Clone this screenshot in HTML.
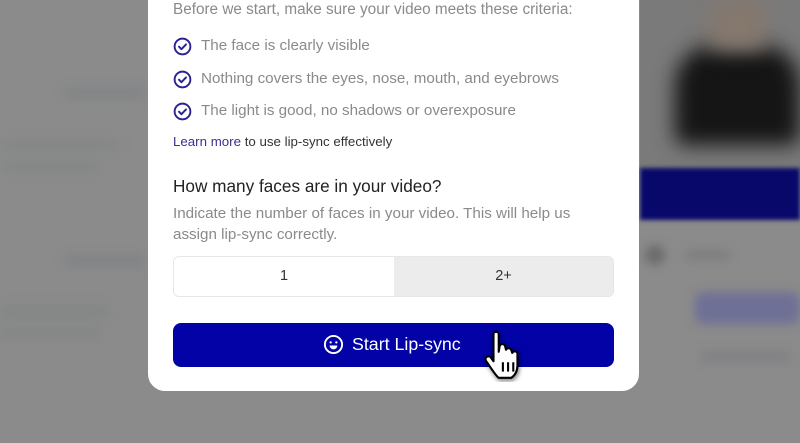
<!DOCTYPE html>
<html><head><style>
*{margin:0;padding:0;box-sizing:border-box}
body{width:800px;height:443px;overflow:hidden;background:#8b8b8b;position:relative;font-family:"Liberation Sans",sans-serif}
.b{position:absolute;filter:blur(5px);border-radius:4px}
.modal{position:absolute;left:148px;top:-20px;width:491px;height:411px;background:#fff;border-radius:0 0 17px 17px}
.t{position:absolute;white-space:nowrap}
.chk{position:absolute;left:173px;width:19px;height:19px}
</style></head><body>
<div class="b" style="left:65px;top:88px;width:80px;height:10px;background:#818385"></div>
<div class="b" style="left:0;top:140px;width:120px;height:10px;background:#848687"></div>
<div class="b" style="left:0;top:162px;width:100px;height:10px;background:#848687"></div>
<div class="b" style="left:65px;top:255px;width:80px;height:12px;background:#818385"></div>
<div class="b" style="left:0;top:305px;width:110px;height:12px;background:#848687"></div>
<div class="b" style="left:0;top:327px;width:100px;height:12px;background:#848687"></div>
<div style="position:absolute;left:640px;top:0;width:160px;height:170px;background:#7a7a7a"></div>
<div class="b" style="left:675px;top:45px;width:125px;height:100px;background:#151515;border-radius:40px 40px 10px 10px;filter:blur(10px)"></div>
<div class="b" style="left:710px;top:0;width:55px;height:50px;background:#85786d;filter:blur(10px)"></div>
<div style="position:absolute;left:640px;top:168px;width:160px;height:52px;background:#08086a;filter:blur(2px)"></div>
<div class="b" style="left:645px;top:245px;width:20px;height:20px;background:#6a6a6c;border-radius:50%"></div>
<div class="b" style="left:685px;top:250px;width:45px;height:10px;background:#7d7d80"></div>
<div class="b" style="left:695px;top:292px;width:105px;height:32px;background:#6f7096;border-radius:8px"></div>
<div class="b" style="left:700px;top:352px;width:90px;height:10px;background:#808083"></div>
<div class="modal"></div>
<div class="t" style="left:173px;top:1px;font-size:15.3px;color:#8a8a8a">Before we start, make sure your video meets these criteria:</div>
<svg class="chk" style="top:37px" viewBox="0 0 20 20"><circle cx="10" cy="10" r="8.3" fill="none" stroke="#2a2290" stroke-width="2"/><path d="M6.3 10.2l2.6 2.6 4.8-5" fill="none" stroke="#2a2290" stroke-width="2" stroke-linecap="round" stroke-linejoin="round"/></svg>
<svg class="chk" style="top:70px" viewBox="0 0 20 20"><circle cx="10" cy="10" r="8.3" fill="none" stroke="#2a2290" stroke-width="2"/><path d="M6.3 10.2l2.6 2.6 4.8-5" fill="none" stroke="#2a2290" stroke-width="2" stroke-linecap="round" stroke-linejoin="round"/></svg>
<svg class="chk" style="top:102px" viewBox="0 0 20 20"><circle cx="10" cy="10" r="8.3" fill="none" stroke="#2a2290" stroke-width="2"/><path d="M6.3 10.2l2.6 2.6 4.8-5" fill="none" stroke="#2a2290" stroke-width="2" stroke-linecap="round" stroke-linejoin="round"/></svg>
<div class="t" style="left:201px;top:37px;font-size:15.2px;color:#8a8a8a">The face is clearly visible</div>
<div class="t" style="left:201px;top:70px;font-size:15.2px;color:#8a8a8a">Nothing covers the eyes, nose, mouth, and eyebrows</div>
<div class="t" style="left:201px;top:102px;font-size:15.2px;color:#8a8a8a">The light is good, no shadows or overexposure</div>
<div class="t" style="left:173px;top:134px;font-size:13.3px;color:#333"><span style="color:#3b318f">Learn more</span> to use lip-sync effectively</div>
<div class="t" style="left:173px;top:176px;font-size:17.2px;color:#222">How many faces are in your video?</div>
<div class="t" style="left:173px;top:203px;font-size:15.2px;color:#8a8a8a;line-height:21px">Indicate the number of faces in your video. This will help us<br>assign lip-sync correctly.</div>
<div style="position:absolute;left:173px;top:256px;width:441px;height:41px;border:1px solid #e6e6e6;border-radius:6px;overflow:hidden;display:flex">
<div style="width:220px;background:#fff;text-align:center;line-height:39px;font-size:14.5px;color:#333">1</div>
<div style="flex:1;background:#ececec;text-align:center;line-height:39px;font-size:14.5px;color:#333">2+</div>
</div>
<div style="position:absolute;left:173px;top:323px;width:441px;height:44px;background:#0202a6;border-radius:8px"></div>
<svg style="position:absolute;left:323px;top:334px;width:21px;height:21px" viewBox="0 0 20 20"><circle cx="10" cy="10" r="8.2" fill="none" stroke="#fff" stroke-width="1.8"/><circle cx="7.3" cy="8" r="1.1" fill="#fff"/><circle cx="12.7" cy="8" r="1.1" fill="#fff"/><path d="M6.3 11h7.4a3.7 3.7 0 0 1-7.4 0z" fill="#fff"/></svg>
<div class="t" style="left:352px;top:334px;font-size:17.8px;color:#fff">Start Lip-sync</div>
<svg style="position:absolute;left:483px;top:330px;width:46px;height:52px" viewBox="0 0 44 50"><path d="M10 4c0-3 5-3 5 0v17l1-6c1-2 4-2 5 0l1 4c1-2 4-2 5 0l1 3c1-2 4-2 5 0v12c0 6-3 10-6 12H15c-3-2-9-12-12-16-2-3 1-6 4-4l3 4z" fill="#fff" stroke="#000" stroke-width="2" stroke-linejoin="round" filter="drop-shadow(1px 2px 2px rgba(0,0,0,.5))"/><path d="M19 31v9M24 31v9M29 31v9" stroke="#000" stroke-width="2"/></svg>
</body></html>
